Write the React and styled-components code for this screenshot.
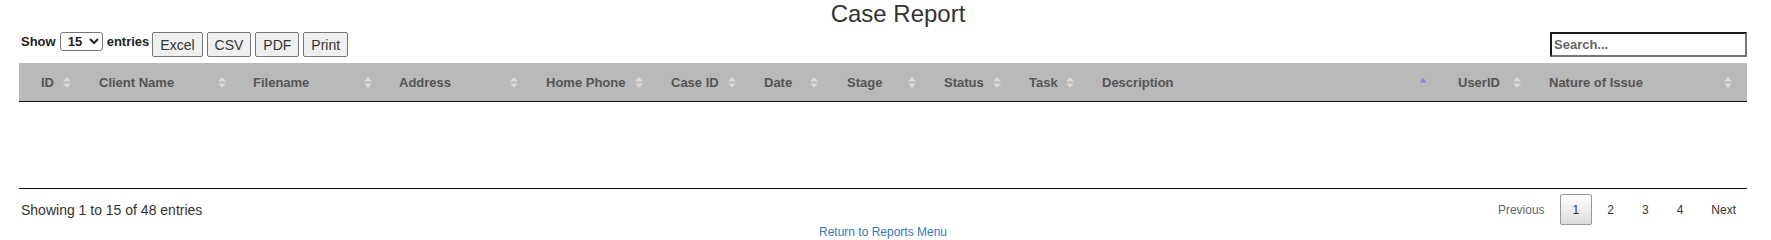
import styled, { createGlobalStyle } from 'styled-components';

const GlobalStyle = createGlobalStyle`
  body {
    margin: 0;
    background: #fff;
    font-family: 'Liberation Sans', Arial, sans-serif;
    color: #333;
  }
`;

const Page = styled.div`
  padding: 0 24px 0 19px;
  width: 1728px;
`;

const Title = styled.h2`
  margin: 0;
  padding-left: 30px;
  font-size: 24px;
  line-height: 28px;
  font-weight: normal;
  text-align: center;
  color: #333;
`;

const Controls = styled.div`
  display: flex;
  justify-content: space-between;
  align-items: flex-start;
  margin-top: 4px;
  height: 25px;
`;

const LeftControls = styled.div`
  display: flex;
  align-items: flex-start;
`;

const Length = styled.label`
  display: flex;
  align-items: center;
  gap: 4px;
  height: 19px;
  padding-left: 2px;
  font-size: 13px;
  font-weight: bold;
  color: #222;
`;

const Select = styled.select`
  font-family: 'Liberation Sans', Arial, sans-serif;
  font-size: 13px;
  font-weight: bold;
  height: 19px;
  width: 43px;
  padding: 0 0 0 3px;
  border: 1px solid #767676;
  border-radius: 3px;
  background: #fff;
  color: #222;
`;

const Buttons = styled.div`
  display: flex;
  gap: 4px;
  margin-left: 3px;
`;

const ExportButton = styled.button`
  height: 25px;
  padding: 0 7px;
  font-family: 'Liberation Sans', Arial, sans-serif;
  font-size: 14px;
  color: #333;
  background: #efefef;
  border: 1px solid #767676;
  border-radius: 2px;
`;

const Search = styled.input`
  box-sizing: border-box;
  width: 197px;
  height: 25px;
  padding: 0 2px;
  font-family: 'Liberation Sans', Arial, sans-serif;
  font-size: 13px;
  font-weight: bold;
  border-style: solid;
  border-width: 2px;
  border-color: #1a1a1a #767676 #767676 #1a1a1a;
  outline: none;
  &::placeholder {
    color: #666;
  }
`;

const Table = styled.div`
  margin-top: 6px;
  border-bottom: 1px solid #111;
`;

const HeadRow = styled.div`
  display: grid;
  grid-template-columns: ${(p) => p.$cols};
  height: 38px;
  background: #b9b9b9;
  border-bottom: 1px solid #111;
`;

const HeadCell = styled.div`
  display: flex;
  align-items: center;
  justify-content: space-between;
  padding: 0 ${(p) => p.$pr}px 0 22px;
  font-size: 13px;
  font-weight: bold;
  color: #555;
  white-space: nowrap;
`;

const Body = styled.div`
  height: 86px;
`;

const Footer = styled.div`
  display: flex;
  justify-content: space-between;
  align-items: center;
  margin-top: 5px;
  height: 31px;
`;

const Info = styled.div`
  padding-left: 2px;
  font-size: 14px;
  color: #333;
`;

const Paginate = styled.div`
  display: flex;
  gap: 2px;
  margin-right: -2px;
`;

const PageButton = styled.span`
  display: flex;
  align-items: center;
  box-sizing: border-box;
  height: 31px;
  padding: 0 12px;
  font-size: 12px;
  color: ${(p) => (p.$disabled ? '#666' : '#333')};
  border: 1px solid ${(p) => (p.$current ? '#979797' : 'transparent')};
  border-radius: 2px;
  background: ${(p) =>
    p.$current ? 'linear-gradient(to bottom, #fff 0%, #dcdcdc 100%)' : 'none'};
`;

const Return = styled.a`
  display: block;
  text-align: center;
  font-size: 12px;
  line-height: 14px;
  color: #337ab7;
  text-decoration: none;
`;

const SortIcon = ({ dir }) =>
  dir === 'asc' ? (
    <svg width="8" height="11" viewBox="0 0 8 11">
      <polygon points="1,5.5 4,1 7,5.5" fill="#7f7fe6" />
    </svg>
  ) : (
    <svg width="8" height="11" viewBox="0 0 8 11">
      <polygon points="0,4.5 4,0 8,4.5" fill="#d9d9d9" />
      <polygon points="0,6.5 8,6.5 4,11" fill="#d9d9d9" />
    </svg>
  );

const columns = [
  { name: 'ID', w: 58, pr: 6 },
  { name: 'Client Name', w: 154, pr: 5 },
  { name: 'Filename', w: 146, pr: 5 },
  { name: 'Address', w: 147, pr: 6 },
  { name: 'Home Phone', w: 125, pr: 6 },
  { name: 'Case ID', w: 93, pr: 6 },
  { name: 'Date', w: 83, pr: 7 },
  { name: 'Stage', w: 97, pr: 6 },
  { name: 'Status', w: 85, pr: 6 },
  { name: 'Task', w: 73, pr: 6 },
  { name: 'Description', w: 356, pr: 9, dir: 'asc' },
  { name: 'UserID', w: 91, pr: 6 },
  { name: 'Nature of Issue', w: 220, pr: 15 },
];

const App = () => {
  return (
    <Page>
      <GlobalStyle />
      <Title>Case Report</Title>
      <Controls>
        <LeftControls>
          <Length>
            Show
            <Select defaultValue="15">
              <option value="10">10</option>
              <option value="15">15</option>
              <option value="25">25</option>
              <option value="50">50</option>
            </Select>
            entries
          </Length>
          <Buttons>
            <ExportButton>Excel</ExportButton>
            <ExportButton>CSV</ExportButton>
            <ExportButton>PDF</ExportButton>
            <ExportButton>Print</ExportButton>
          </Buttons>
        </LeftControls>
        <Search placeholder="Search..." />
      </Controls>
      <Table>
        <HeadRow $cols={columns.map((c) => `${c.w}px`).join(' ')}>
          {columns.map((c) => (
            <HeadCell key={c.name} $pr={c.pr}>
              <span>{c.name}</span>
              <SortIcon dir={c.dir} />
            </HeadCell>
          ))}
        </HeadRow>
        <Body />
      </Table>
      <Footer>
        <Info>Showing 1 to 15 of 48 entries</Info>
        <Paginate>
          <PageButton $disabled>Previous</PageButton>
          <PageButton $current>1</PageButton>
          <PageButton>2</PageButton>
          <PageButton>3</PageButton>
          <PageButton>4</PageButton>
          <PageButton>Next</PageButton>
        </Paginate>
      </Footer>
      <Return href="#">Return to Reports Menu</Return>
    </Page>
  );
};

export default App;
